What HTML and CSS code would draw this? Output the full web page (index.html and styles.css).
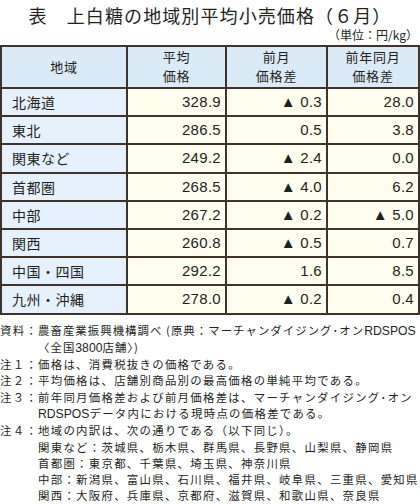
FILE: index.html
```html
<!DOCTYPE html>
<html>
<head>
	<meta charset="utf-8">
	<title>上白糖の地域別平均小売価格</title>
	<link rel="stylesheet" href="styles.css">
</head>
<body>
	<div class="page">
		<h1 class="title">表　上白糖の地域別平均小売価格（６月）</h1>
		<div class="unit">（単位：円/kg）</div>
		<table class="price_table">
			<tr class="head">
				<th>地域</th>
				<th>平均<br>価格</th>
				<th>前月<br>価格差</th>
				<th>前年同月<br>価格差</th>
			</tr>
			<tr><td class="area">北海道</td><td>328.9</td><td>▲ 0.3</td><td>28.0</td></tr>
			<tr><td class="area">東北</td><td>286.5</td><td>0.5</td><td>3.8</td></tr>
			<tr><td class="area">関東など</td><td>249.2</td><td>▲ 2.4</td><td>0.0</td></tr>
			<tr><td class="area">首都圏</td><td>268.5</td><td>▲ 4.0</td><td>6.2</td></tr>
			<tr><td class="area">中部</td><td>267.2</td><td>▲ 0.2</td><td>▲ 5.0</td></tr>
			<tr><td class="area">関西</td><td>260.8</td><td>▲ 0.5</td><td>0.7</td></tr>
			<tr><td class="area">中国・四国</td><td>292.2</td><td>1.6</td><td>8.5</td></tr>
			<tr><td class="area">九州・沖縄</td><td>278.0</td><td>▲ 0.2</td><td>0.4</td></tr>
		</table>
		<div class="notes">
			<div class="note source">
				<span class="label">資料：</span>
				<span class="body">農畜産業振興機構調べ (原典：マーチャンダイジング･オン<span class="latin">RDSPOS</span><br>〈全国<span class="latin">3800</span>店舗〉)</span>
			</div>
			<div class="note">
				<span class="label">注１：</span>
				<span class="body">価格は、消費税抜きの価格である。</span>
			</div>
			<div class="note">
				<span class="label">注２：</span>
				<span class="body">平均価格は、店舗別商品別の最高価格の単純平均である。</span>
			</div>
			<div class="note">
				<span class="label">注３：</span>
				<span class="body">前年同月価格差および前月価格差は、マーチャンダイジング･オン<br><span class="latin">RDSPOS</span>データ内における現時点の価格差である。</span>
			</div>
			<div class="note">
				<span class="label">注４：</span>
				<span class="body">地域の内訳は、次の通りである（以下同じ）。<br>関東など：茨城県、栃木県、群馬県、長野県、山梨県、静岡県<br>首都圏：東京都、千葉県、埼玉県、神奈川県<br>中部：新潟県、富山県、石川県、福井県、岐阜県、三重県、愛知県<br>関西：大阪府、兵庫県、京都府、滋賀県、和歌山県、奈良県</span>
			</div>
		</div>
	</div>
</body>
</html>
```

FILE: styles.css
```css
body {
	margin: 0;
	background-color: white;
	color: #231f1c;
	font-family: "Noto Sans CJK JP", sans-serif;
}
.page {
	width: 420px;
}
.title {
	margin: 0;
	padding-top: 3px;
	height: 24px;
	font-size: 18px;
	font-weight: normal;
	line-height: 24px;
	letter-spacing: 1.1px;
	text-align: center;
}
.unit {
	height: 18px;
	padding-right: 2px;
	font-size: 12px;
	line-height: 16px;
	text-align: right;
}
.price_table {
	width: 420px;
	border-collapse: collapse;
	table-layout: fixed;
}
.price_table th, .price_table td {
	border: 2px solid #3e342c;
	padding: 0 4px;
	font-size: 14px;
	line-height: 18px;
}
.price_table th {
	height: 40px;
	background-color: #dbeaf7;
	font-size: 13px;
	font-weight: normal;
	line-height: 18.8px;
	letter-spacing: 0.8px;
	text-align: center;
}
.price_table th:nth-child(1) { width: 116px; }
.price_table th:nth-child(2) { width: 89px; }
.price_table th:nth-child(3) { width: 91px; }
.price_table td {
	height: 26.2px;
	background-color: #fffdee;
	text-align: right;
	font-family: "Liberation Sans", "Noto Sans CJK JP", sans-serif;
	font-size: 15px;
	letter-spacing: 0.3px;
}
.price_table td.area {
	padding-left: 10px;
	background-color: #e5f2fd;
	text-align: left;
	font-family: "Noto Sans CJK JP", sans-serif;
	font-size: 14px;
	letter-spacing: 0.5px;
}
.notes {
	padding-top: 7px;
	font-size: 11.4px;
	line-height: 16.3px;
	letter-spacing: 1.3px;
	white-space: nowrap;
}
.note {
	display: flex;
}
.note .label {
	width: 38px;
	flex: none;
}
.source .body {
	letter-spacing: 1.05px;
}
.latin {
	font-family: "Liberation Sans", sans-serif;
	font-size: 12.2px;
	letter-spacing: 0;
}
```
